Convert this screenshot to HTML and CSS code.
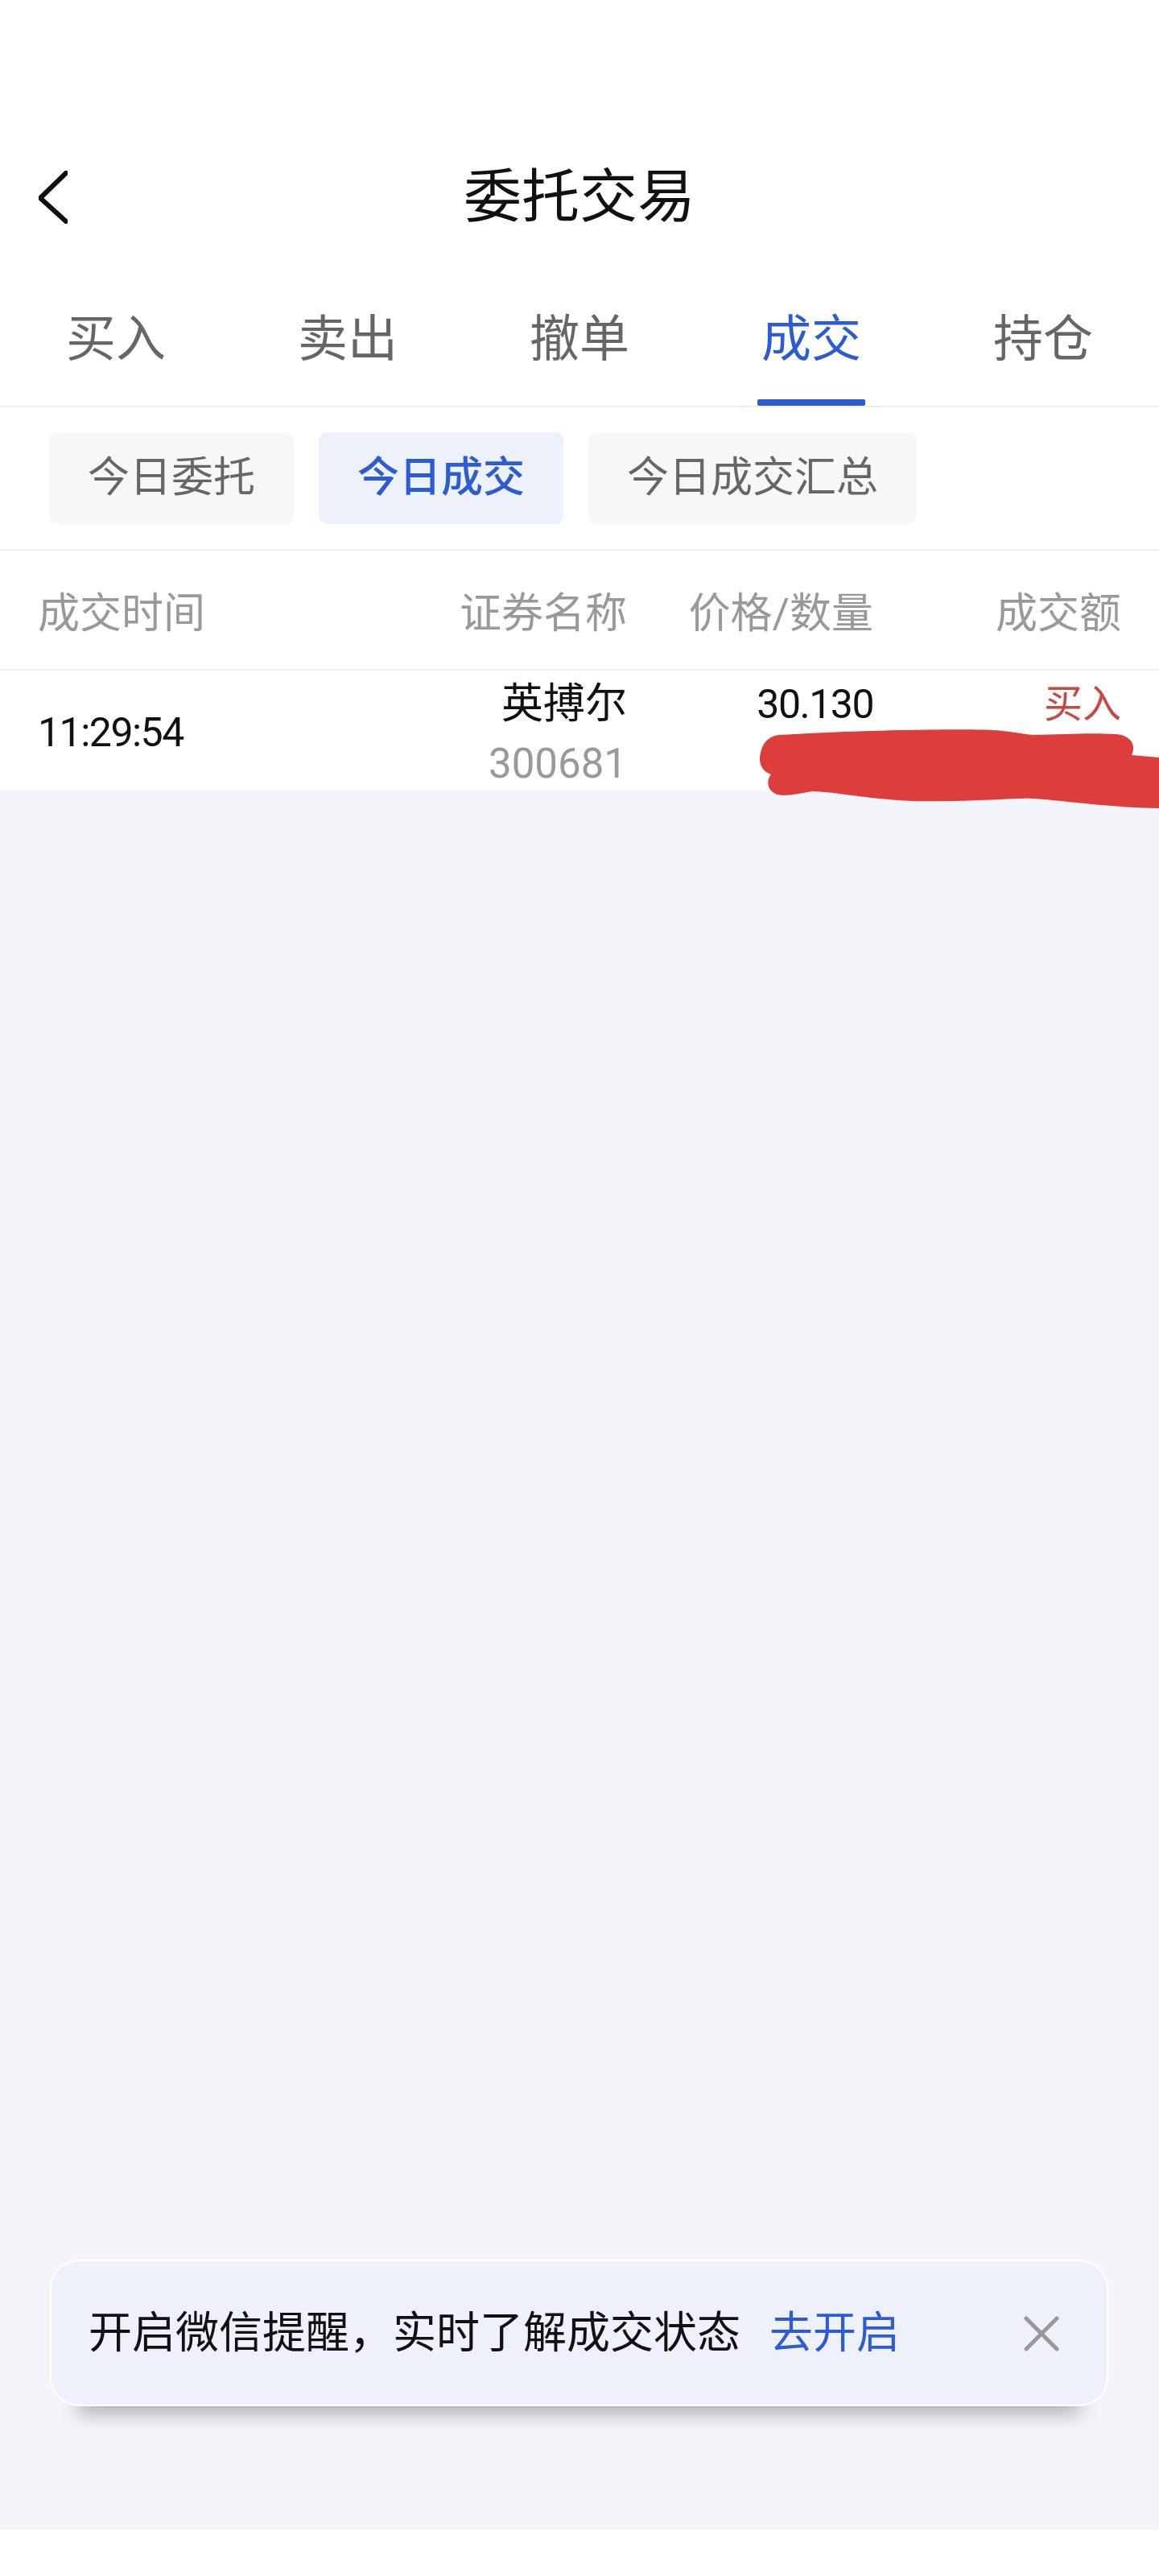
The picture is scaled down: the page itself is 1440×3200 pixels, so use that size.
FILE: index.html
```html
<!DOCTYPE html>
<html lang="zh-CN">
<head>
    <meta charset="UTF-8">
    <meta name="viewport" content="width=device-width, initial-scale=1.0">
    <title>委托交易</title>
    <link rel="stylesheet" href="styles.css">
</head>
<body>

<div class="page">
    <div class="status"></div>

    <div class="navbar">
        <div class="back">
            <svg width="36" height="66" viewBox="0 0 36 66">
                <polyline points="34,3 2,34 34,63" fill="none" stroke="#111" stroke-width="6" stroke-linecap="round" stroke-linejoin="round"/>
            </svg>
        </div>
        <div class="title">委托交易</div>
        <div></div>
    </div>

    <div class="tabs">
        <div class="tab"><span>买入</span><i></i></div>
        <div class="tab"><span>卖出</span><i></i></div>
        <div class="tab"><span>撤单</span><i></i></div>
        <div class="tab active"><span>成交</span><i></i></div>
        <div class="tab"><span>持仓</span><i></i></div>
    </div>

    <div class="chips">
        <div class="chip">今日委托</div>
        <div class="chip active">今日成交</div>
        <div class="chip">今日成交汇总</div>
    </div>

    <div class="table-head">
        <div class="col-time">成交时间</div>
        <div class="col-right">证券名称</div>
        <div class="col-right">价格/数量</div>
        <div class="col-right">成交额</div>
    </div>

    <div class="table-row">
        <div class="col-time cell-time">11:29:54</div>
        <div class="col-right cell-name">
            <div class="name">英搏尔</div>
            <div class="code">300681</div>
        </div>
        <div class="col-right cell-price">30.130</div>
        <div class="col-right cell-side">买入</div>

        <!-- redaction scribble -->
        <svg class="scribble" width="500" height="110" viewBox="940 900 500 110">
            <path d="M967 913 C1050 908 1180 905 1233 907 C1255 908 1270 912 1283 913 C1320 912 1360 910 1387 912 C1405 914 1412 925 1406 938 L1440 941 L1440 1004 C1410 1004 1385 1001 1367 1000 C1320 996 1290 991 1267 992 C1220 994 1180 996 1133 995 C1080 993 1040 984 1010 983 C995 985 985 988 973 988 C955 988 950 972 958 962 C945 958 942 945 945 935 C948 922 955 915 967 913 Z" fill="#dd3d3b"/>
        </svg>
    </div>

    <div class="content">
        <div class="toast">
            <span class="toast-text">开启微信提醒，实时了解成交状态</span>
            <span class="toast-link">去开启</span>
            <svg class="toast-close" width="44" height="44" viewBox="0 0 44 44">
                <line x1="3" y1="3" x2="41" y2="41" stroke="#999" stroke-width="5" stroke-linecap="round"/>
                <line x1="41" y1="3" x2="3" y2="41" stroke="#999" stroke-width="5" stroke-linecap="round"/>
            </svg>
        </div>
    </div>

    <div class="footer"></div>
</div>

</body>
</html>
```

FILE: styles.css
```css
body {
    margin: 0;
    padding: 0;
    font-family: Roboto, "Noto Sans CJK SC", sans-serif;
    color: #111;
    background-color: #fff;
}

.page {
    min-height: 3200px;
    display: flex;
    flex-direction: column;
}

.status {
    height: 170px;
}

.navbar {
    height: 150px;
    display: grid;
    grid-template-columns: 1fr auto 1fr;
    align-items: center;
}

.back {
    padding-left: 48px;
    display: flex;
    align-items: center;
}

.title {
    font-size: 72px;
    line-height: 150px;
    color: #111;
}

.tabs {
    display: grid;
    grid-template-columns: repeat(5, 1fr);
    border-bottom: 2px solid #eeeeee;
}

.tab {
    display: flex;
    flex-direction: column;
    align-items: center;
    padding-top: 62px;
    font-size: 62px;
    color: #666;
}

.tab span {
    line-height: 80px;
}

.tab i {
    display: block;
    width: 134px;
    height: 8px;
    margin-top: 34px;
    border-radius: 2px;
}

.tab.active {
    color: #2c5bd3;
}

.tab.active i {
    background-color: #2c5bd3;
}

.chips {
    display: flex;
    gap: 31px;
    padding: 31px 0 31px 61px;
    border-bottom: 2px solid #f0f0f0;
}

.chip {
    height: 114px;
    line-height: 114px;
    padding: 0 48px;
    font-size: 52px;
    color: #666;
    background-color: #f7f7f7;
    border-radius: 10px;
}

.chip.active {
    color: #2c5bd3;
    background-color: #edf1fc;
    font-weight: 500;
}

.table-head,
.table-row {
    display: grid;
    grid-template-columns: 452px 280px 306px 308px;
    padding: 0 47px;
}

.table-head {
    height: 147px;
    align-items: center;
    font-size: 52px;
    color: #999;
    border-bottom: 2px solid #f0f0f0;
}

.col-right {
    text-align: right;
}

.table-row {
    position: relative;
    height: 149px;
    align-items: start;
    font-size: 52px;
}

.cell-time {
    align-self: center;
    font-size: 50px;
    letter-spacing: -1.5px;
}

.cell-name {
    padding-top: 5px;
    line-height: 74px;
}

.code {
    color: #999;
    font-size: 51px;
}

.cell-price {
    padding-top: 5px;
    line-height: 74px;
    font-size: 50px;
    letter-spacing: -1.5px;
}

.cell-side {
    padding-top: 5px;
    line-height: 74px;
    font-size: 48px;
    color: #c44a45;
}

.scribble {
    position: absolute;
    left: 940px;
    top: 67px;
    z-index: 2;
    overflow: visible;
}

.content {
    flex: 1;
    position: relative;
    background-color: #f4f5fa;
}

.toast {
    position: absolute;
    left: 62px;
    right: 63px;
    bottom: 154px;
    height: 182px;
    box-sizing: border-box;
    display: flex;
    align-items: center;
    padding: 0 0 10px 46px;
    background-color: #eef1fb;
    border: 2px solid #fff;
    border-radius: 36px;
    box-shadow: 0 45px 24px -35px rgba(0, 0, 0, 0.28);
}

.toast-text {
    font-size: 54px;
    color: #111;
}

.toast-link {
    margin-left: 36px;
    font-size: 54px;
    color: #2c5bd3;
}

.toast-close {
    margin-left: auto;
    margin-right: 59px;
    margin-top: 12px;
}

.footer {
    height: 57px;
    background-color: #fff;
}
```
